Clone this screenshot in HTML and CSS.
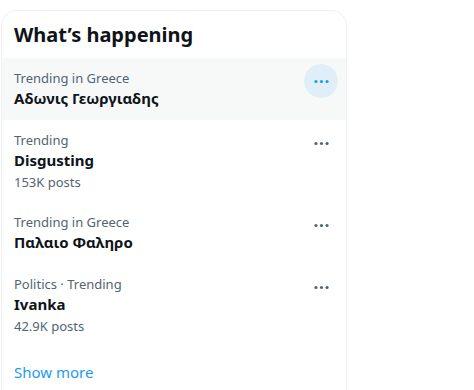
FILE: index.html
```html
<!DOCTYPE html>
<html lang="en">
<head>
    <meta charset="UTF-8">
    <meta name="viewport" content="width=device-width, initial-scale=1.0">
    <title>What's happening</title>
    <link rel="stylesheet" href="styles.css">
</head>
<body>
    <section class="panel">
        <h2 class="panel-title">What’s happening</h2>

        <div class="trend trend-hover">
            <div class="trend-body">
                <div class="trend-meta">Trending in Greece</div>
                <div class="trend-name">Αδωνις Γεωργιαδης</div>
            </div>
            <button class="trend-more">
                <svg viewBox="0 0 24 24" class="dots"><circle cx="5" cy="12" r="2"/><circle cx="12" cy="12" r="2"/><circle cx="19" cy="12" r="2"/></svg>
            </button>
        </div>

        <div class="trend">
            <div class="trend-body">
                <div class="trend-meta">Trending</div>
                <div class="trend-name">Disgusting</div>
                <div class="trend-count">153K posts</div>
            </div>
            <button class="trend-more">
                <svg viewBox="0 0 24 24" class="dots"><circle cx="5" cy="12" r="2"/><circle cx="12" cy="12" r="2"/><circle cx="19" cy="12" r="2"/></svg>
            </button>
        </div>

        <div class="trend">
            <div class="trend-body">
                <div class="trend-meta">Trending in Greece</div>
                <div class="trend-name">Παλαιο Φαληρο</div>
            </div>
            <button class="trend-more">
                <svg viewBox="0 0 24 24" class="dots"><circle cx="5" cy="12" r="2"/><circle cx="12" cy="12" r="2"/><circle cx="19" cy="12" r="2"/></svg>
            </button>
        </div>

        <div class="trend">
            <div class="trend-body">
                <div class="trend-meta">Politics · Trending</div>
                <div class="trend-name">Ivanka</div>
                <div class="trend-count">42.9K posts</div>
            </div>
            <button class="trend-more">
                <svg viewBox="0 0 24 24" class="dots"><circle cx="5" cy="12" r="2"/><circle cx="12" cy="12" r="2"/><circle cx="19" cy="12" r="2"/></svg>
            </button>
        </div>

        <a class="show-more" href="#">Show more</a>
    </section>
</body>
</html>
```

FILE: styles.css
```css
* {
    margin: 0;
    padding: 0;
    box-sizing: border-box;
}

body {
    font-family: "Segoe UI", "Noto Sans", Roboto, sans-serif;
    background: #ffffff;
    color: #0f1419;
    padding: 10px 0 0 1px;
    overflow: hidden;
}

.panel {
    width: 346px;
    height: 380px;
    border: 1px solid #eff3f4;
    border-bottom: none;
    border-radius: 16px 16px 0 0;
    overflow: hidden;
}

.panel-title {
    padding: 12px 16px 11px 12px;
    font-size: 20px;
    line-height: 24px;
    font-weight: 700;
}

.trend {
    display: flex;
    align-items: flex-start;
    padding: 12px 16px 12px 12px;
}

.trend-hover {
    background: #f7f9f9;
}

.trend-body {
    flex: 1;
}

.trend-meta,
.trend-count {
    font-size: 13px;
    line-height: 16px;
    color: #536471;
}

.trend-name {
    padding-top: 2px;
    font-size: 15px;
    line-height: 20px;
    font-weight: 700;
}

.trend-count {
    margin-top: 4px;
}

.trend-more {
    width: 34px;
    height: 34px;
    margin: -6px -8px 0 0;
    border: none;
    border-radius: 50%;
    background: transparent;
    display: flex;
    align-items: center;
    justify-content: center;
    cursor: pointer;
}

.dots {
    width: 19px;
    height: 19px;
    fill: #536471;
}

.trend-hover .trend-more {
    background: rgba(29, 155, 240, 0.1);
}

.trend-hover .dots {
    fill: #1d9bf0;
}

.show-more {
    display: block;
    padding: 16px 12px;
    font-size: 15px;
    line-height: 20px;
    color: #1d9bf0;
    text-decoration: none;
}
```
